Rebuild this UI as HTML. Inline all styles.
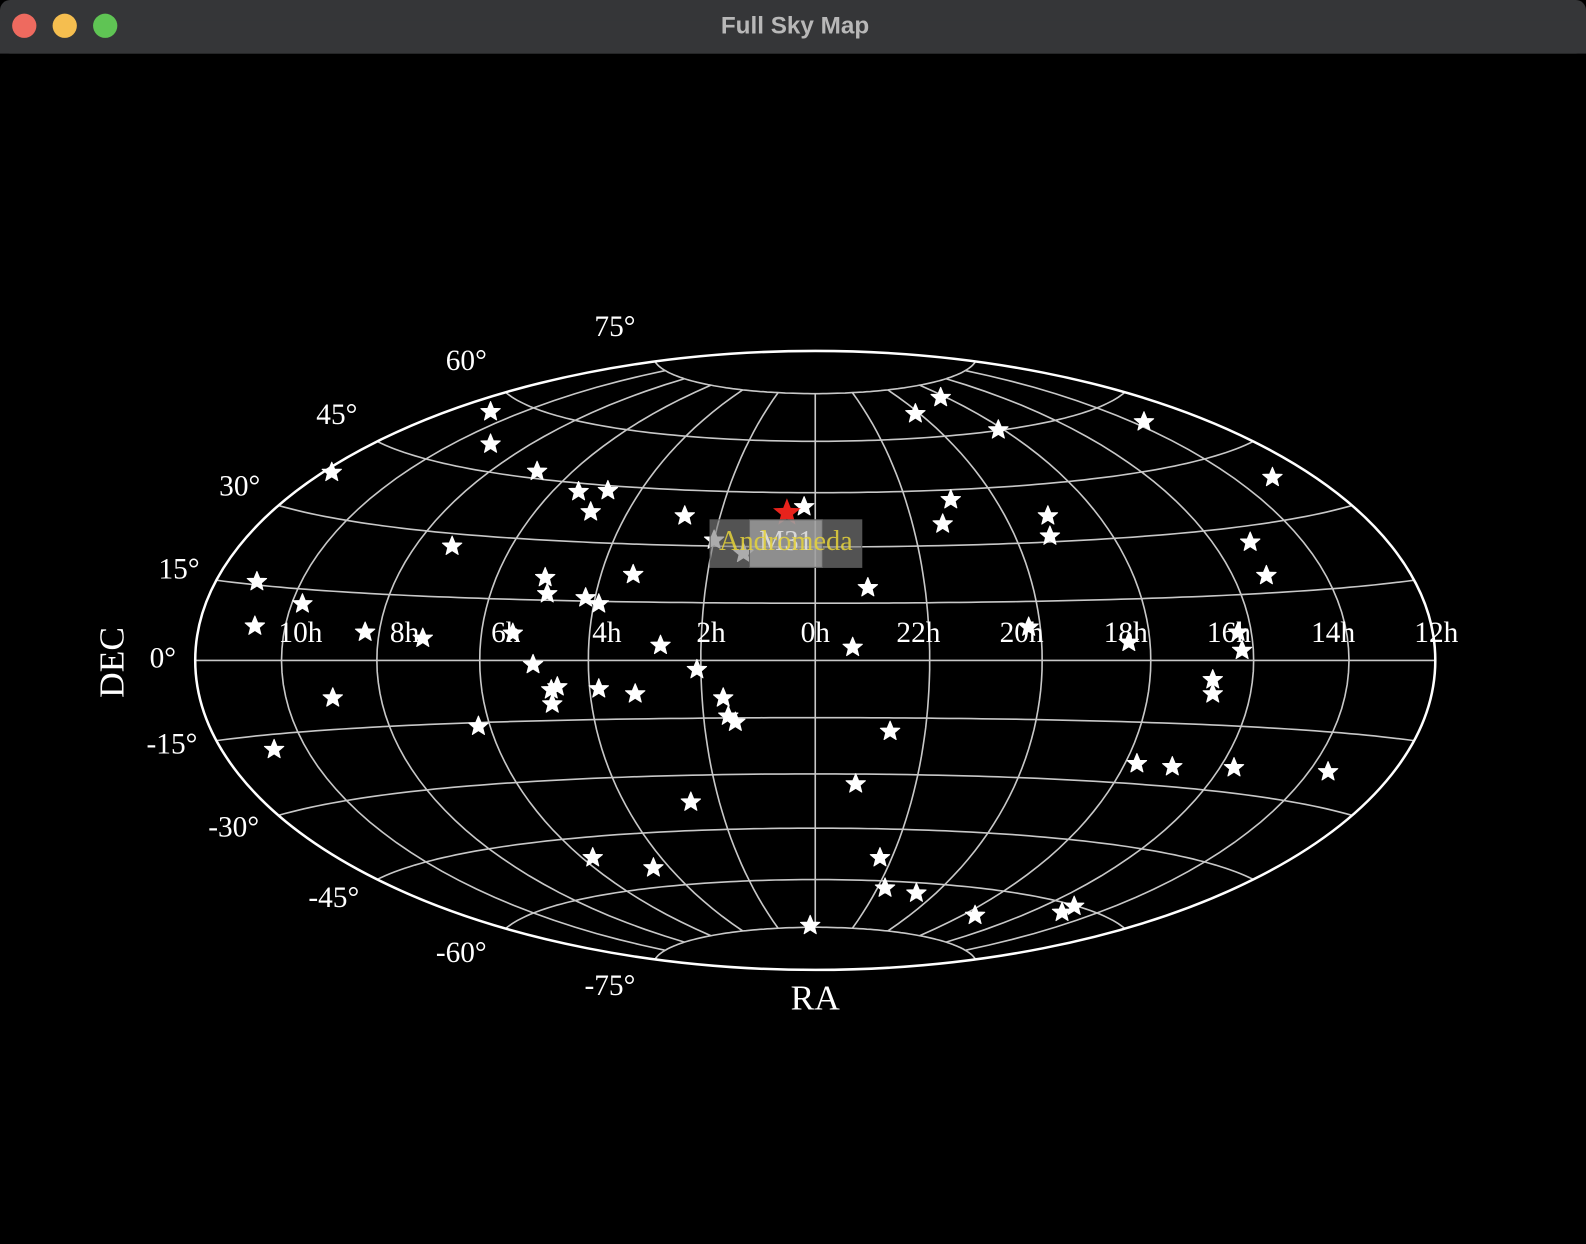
<!DOCTYPE html>
<html><head><meta charset="utf-8"><style>
html,body{margin:0;padding:0;background:#000;width:1586px;height:1244px;overflow:hidden}
svg{display:block}
</style></head><body>
<svg id="s" width="1586" height="1244" viewBox="0 0 1568 1230" preserveAspectRatio="none" xmlns="http://www.w3.org/2000/svg">
<defs><polygon id="st" points="0,-10 2.8,-3.2 9.6,-3 4.3,1.5 6,8.2 0,4.4 -6,8.2 -4.3,1.5 -9.6,-3 -2.8,-3.2" fill="#fff" stroke="#fff" stroke-width="1" stroke-linejoin="round"/></defs>
<rect x="0" y="0" width="1568" height="1230" fill="#000"/>
<rect x="0" y="0" width="1568" height="53" rx="10" fill="#353638"/>
<rect x="0" y="20" width="1568" height="33" fill="#353638"/>
<circle cx="24" cy="25.5" r="12" fill="#ee6a5f"/>
<circle cx="64" cy="25.5" r="12" fill="#f5be4f"/>
<circle cx="104" cy="25.5" r="12" fill="#5fc454"/>
<text x="786" y="33" text-anchor="middle" font-family="Liberation Sans, sans-serif" font-weight="bold" font-size="24" fill="#b8b8b8">Full Sky Map</text>
<g id="grid" fill="none" stroke="#c8c8c8" stroke-width="1.6"></g>
<ellipse cx="806" cy="653" rx="613" ry="306" fill="none" stroke="#fff" stroke-width="2.5"/>
<g font-family="Liberation Serif, serif" font-size="29" fill="#fff">
<text x="297" y="635" text-anchor="middle">10h</text><text x="400" y="635" text-anchor="middle">8h</text>
<text x="500" y="635" text-anchor="middle">6h</text><text x="600" y="635" text-anchor="middle">4h</text>
<text x="703" y="635" text-anchor="middle">2h</text><text x="806" y="635" text-anchor="middle">0h</text>
<text x="908" y="635" text-anchor="middle">22h</text><text x="1010" y="635" text-anchor="middle">20h</text>
<text x="1113" y="635" text-anchor="middle">18h</text><text x="1215" y="635" text-anchor="middle">16h</text>
<text x="1318" y="635" text-anchor="middle">14h</text><text x="1420" y="635" text-anchor="middle">12h</text>
<text x="608" y="332" text-anchor="middle">75°</text><text x="461" y="366" text-anchor="middle">60°</text>
<text x="333" y="419" text-anchor="middle">45°</text><text x="237" y="490" text-anchor="middle">30°</text>
<text x="177" y="572" text-anchor="middle">15°</text><text x="161" y="660" text-anchor="middle">0°</text>
<text x="170" y="745" text-anchor="middle">-15°</text><text x="231" y="827" text-anchor="middle">-30°</text>
<text x="330" y="897" text-anchor="middle">-45°</text><text x="456" y="951" text-anchor="middle">-60°</text>
<text x="603" y="984" text-anchor="middle">-75°</text>
<text x="806" y="998" text-anchor="middle" font-size="35">RA</text>
<text transform="translate(122,655) rotate(-90)" text-anchor="middle" font-size="35">DEC</text>
</g>
<g id="stars"></g>
<polygon points="0,-9 2.3,-3 8.6,-2.8 3.7,1.2 5.3,7.3 0,3.8 -5.3,7.3 -3.7,1.2 -8.6,-2.8 -2.3,-3" fill="#e8231c" transform="translate(778,507) scale(1.6)"/>
<rect x="702" y="514" width="150" height="47" fill="#808080" fill-opacity="0.65" stroke="#555"/>
<rect x="741" y="514" width="72" height="47" fill="#a8a8a8" fill-opacity="0.7" stroke="#666"/>
<g font-family="Liberation Serif, serif" font-size="28">
<text x="777" y="544" text-anchor="middle" fill="#d8d8d8">M31</text>
<text x="777" y="544" text-anchor="middle" fill="#e6d33a" fill-opacity="0.85">Andromeda</text>
</g>
</svg>
<script>
var cx=806,cy=653,S=216.7,ns="http://www.w3.org/2000/svg";
function P(lon,lat){var l=lon*Math.PI/180,p=lat*Math.PI/180;var d=Math.sqrt(1+Math.cos(p)*Math.cos(l/2));
return [cx+S*2*Math.SQRT2*Math.cos(p)*Math.sin(l/2)/d, cy-S*Math.SQRT2*Math.sin(p)/d];}
var g=document.getElementById('grid');
function add(pts){var d='M'+pts.map(function(q){return q[0].toFixed(1)+','+q[1].toFixed(1)}).join('L');
var e=document.createElementNS(ns,'path');e.setAttribute('d',d);g.appendChild(e);}
for(var lat=-75;lat<=75;lat+=15){var a=[];for(var lo=-180;lo<=180;lo+=3)a.push(P(lo,lat));add(a);}
for(var lo=-150;lo<=150;lo+=30){var a=[];for(var la=-75;la<=75;la+=2.5)a.push(P(lo,la));add(a);}
var st=[[485,407],[485,439],[328,467],[531,466],[572,486],[601,485],[584,506],[677,510],[795,501],[447,540],[254,575],[539,571],[541,587],[626,568],[579,591],[592,597],[299,597],[252,619],[361,625],[418,631],[507,626],[653,638],[527,657],[689,662],[843,640],[858,581],[329,690],[545,682],[551,679],[546,696],[592,681],[628,686],[715,690],[720,708],[727,714],[473,718],[271,741],[880,723],[846,775],[683,793],[586,848],[646,858],[870,848],[875,878],[906,883],[964,905],[1050,902],[1062,896],[801,915],[905,409],[930,393],[987,425],[1131,417],[1258,472],[940,494],[932,518],[1036,510],[1038,530],[1236,536],[1252,569],[1017,620],[1116,635],[1224,625],[1228,643],[1199,672],[1199,686],[1124,755],[1159,758],[1220,759],[1313,763],[706,534],[735,547]];
var sg=document.getElementById('stars');
st.forEach(function(q){var u=document.createElementNS(ns,'use');u.setAttribute('href','#st');u.setAttribute('x',q[0]);u.setAttribute('y',q[1]);sg.appendChild(u);});
</script>
</body></html>
